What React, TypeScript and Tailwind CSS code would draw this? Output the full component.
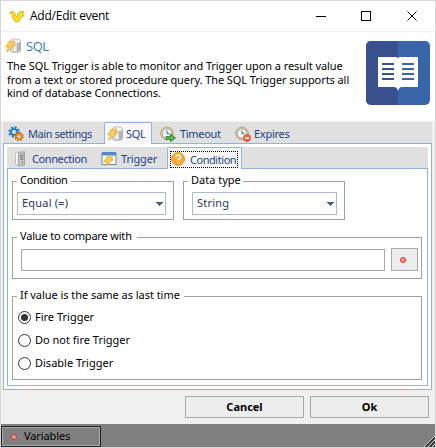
import React from "react";

function DatabaseIcon() {
  return (
    <svg width="16" height="16" viewBox="0 0 16 16" className="shrink-0">
      <path d="M5.500 3v9.500c0 2.500 10 2.500 10 0V3" fill="#d9d9d9" stroke="#a2a2a2" strokeWidth=".8" />
      <path d="M12 5v9c2-.2 3-.8 3-1.500V4z" fill="#b5b5b5" />
      <path d="M9 6v7h1.500V6z" fill="#f7f7f7" />
      <ellipse cx="10.500" cy="3.200" rx="5" ry="2.300" fill="#f4f4f4" stroke="#b0b0b0" strokeWidth=".8" />
      <path d="M4 3.500 10 3 7.500 7h3L1.500 14l2.300-5H.8z" fill="#fcd05a" stroke="#dda640" strokeWidth=".8" />
    </svg>
  );
}

function GearsIcon() {
  return (
    <svg width="16" height="16" viewBox="0 0 16 16" className="shrink-0">
      <circle cx="6" cy="6" r="4.700" fill="none" stroke="#2677b6" strokeWidth="2" strokeDasharray="2 1.690" />
      <circle cx="6" cy="6" r="3.200" fill="#7ab9e4" stroke="#2d85c7" strokeWidth="2" />
      <circle cx="6" cy="6" r="1.500" fill="#fff" />
      <circle cx="11" cy="10.500" r="3.900" fill="none" stroke="#c66a1b" strokeWidth="1.800" strokeDasharray="1.700 1.360" />
      <circle cx="11" cy="10.500" r="2.600" fill="#f5ad50" stroke="#e28527" strokeWidth="1.600" />
      <circle cx="11" cy="10.500" r="1.100" fill="#fff" />
    </svg>
  );
}

function ClockIcon({ expired }: { expired?: boolean }) {
  return (
    <svg width="16" height="16" viewBox="0 0 16 16" className="shrink-0">
      <circle cx="7" cy="7.500" r="6.400" fill="#e2c993" stroke="#b99b63" strokeWidth=".8" />
      <circle cx="7" cy="7.500" r="4.700" fill="#f2f6fb" stroke="#9baabe" />
      <path d="M7 4.500v3.200h2.500" fill="none" stroke="#51617a" />
      {expired ? (
        <>
          <circle cx="12" cy="12" r="3.400" fill="#f0682f" stroke="#ce4a19" strokeWidth=".8" />
          <path d="M10 12h4" stroke="#fff" strokeWidth="1.500" />
        </>
      ) : (
        <path d="M6 10.500h4.500V8l5 4-5 3.700v-2.300H6z" fill="#57b64c" stroke="#2b8430" strokeWidth=".9" />
      )}
    </svg>
  );
}

function ServerIcon() {
  return (
    <svg width="16" height="16" viewBox="0 0 16 16" className="shrink-0">
      <path d="M3.500 2 7 .7h4v13H3.500z" fill="#f5f5f5" stroke="#c2c2c2" />
      <path d="M6.500 1.800 12.500.8v13.200l-6 1z" fill="#c4c4c4" stroke="#9a9a9a" strokeWidth=".8" />
      <path d="M8 4.500 11.500 4M8 6.500 11.500 6M8 8.500l3.500-.5" stroke="#777" />
      <path d="M10.500 10.500v2" stroke="#6cbf58" strokeWidth="1.400" />
    </svg>
  );
}

function TriggerIcon() {
  return (
    <svg width="16" height="16" viewBox="0 0 16 16" className="shrink-0">
      <path d="M1 1.500h14v12H1z" fill="#fff" stroke="#5688c4" />
      <path d="M1 2h14v2.500H1z" fill="#5489c8" />
      <path d="M6 5.500h6l-2 3h3L4 15l2-4H2.500z" fill="#fdcd50" stroke="#deaa42" strokeWidth=".7" />
    </svg>
  );
}

function QuestionIcon() {
  return (
    <svg width="14" height="14" viewBox="0 0 14 14" className="mb-px shrink-0">
      <circle cx="7" cy="7" r="6.400" fill="#fca82f" stroke="#f39322" />
      <path d="M4.700 5.200c0-3 4.700-2.700 4.700 0C9.400 6.900 7 6.600 7 8.500M7 9.700v1.600" fill="none" stroke="#fff" strokeWidth="1.600" />
    </svg>
  );
}

function RedDot() {
  return (
    <svg width="6" height="6" viewBox="0 0 6 6" className="shrink-0">
      <circle cx="3" cy="3" r="2.500" fill="#f78c85" stroke="#df3036" />
      <path d="M2 2.500h2" stroke="#ffc3b8" />
    </svg>
  );
}

function BookIcon() {
  return (
    <svg width="64" height="64" viewBox="0 0 64 64" className="shrink-0">
      <rect width="64" height="64" rx="5" fill="#3865a8" />
      <path d="M5 0h27v64H5a5 5 0 0 1-5-5V5a5 5 0 0 1 5-5" fill="#38508e" />
      <path d="M12 16h18q2 0 2 2 0-2 2-2h18v30H36q-3 0-4 4-1-4-4-4H12z" fill="#fff" />
      <path d="M16 23h12M16 28h12M16 33h12M16 38h12" stroke="#38508e" strokeWidth="2" />
      <path d="M36 23h12M36 28h12M36 33h12M36 38h12" stroke="#3865a8" strokeWidth="2" />
    </svg>
  );
}

function Group({ title, className, titleClass, children }: { title: string; className: string; titleClass: string; children: React.ReactNode }) {
  return (
    <section className={`border border-[#a0a0a0] ${className}`}>
      <h2 className={`-mt-[9px] ml-1 h-4 bg-white pl-[3px] leading-[14px] whitespace-nowrap ${titleClass}`}>{title}</h2>
      {children}
    </section>
  );
}

function Select({ value, className }: { value: string; className: string }) {
  return (
    <div className={`mt-[3px] flex h-[23px] items-center justify-between border border-[#a9bbd6] pr-[2px] pl-1 text-[#1e395b] ${className}`}>
      <span className="pb-[2px] tracking-[0.2px]">{value}</span>
      <svg width="7" height="4" viewBox="0 0 7 4"><path d="M0 0h7v1H6v1H5v1H4v1H3V3H2V2H1V1H0z" fill="#4c607f" /></svg>
    </div>
  );
}

function Radio({ label, checked }: { label: string; checked?: boolean }) {
  return (
    <label className="flex h-[23px] items-center gap-1">
      <span className="flex size-[13px] items-center justify-center rounded-full border border-[#333] bg-white">
        {checked && <span className="size-[7px] rounded-full bg-[#333]" />}
      </span>
      <span className="pb-[2px] whitespace-nowrap">{label}</span>
    </label>
  );
}

export default function App() {
  return (
    <main className="flex h-[448px] w-[436px] flex-col overflow-hidden border border-[#d7d7d7] bg-[#f0f0f0] font-['Noto_Sans',sans-serif] text-[11px] leading-[15px] text-black">
      <header className="flex h-[31px] shrink-0 items-center border-b border-[#f0f0f0] bg-white pl-2">
        <svg width="16" height="12" viewBox="0 0 16 12" className="mt-px">
          <path d="M.5 1.500 3 .5q3 0 3.500 4.500l1.500 1Q8 1.500 11.500.7h3.800l-2 1.500 1.700 2.500-3.200 1.700L10 10.500 7.500 11Q3.500 10 3.500 4z" fill="#ffdb1c" stroke="#c9a925" strokeWidth=".8" />
        </svg>
        <h1 className="ml-[5px] w-[290px] font-['Open_Sans',sans-serif] text-[12px] leading-4 tracking-[-0.22px]">Add/Edit event</h1>
        <svg width="102" height="12" viewBox="0 0 102 12" fill="none" stroke="#000" shapeRendering="crispEdges" className="-ml-[4px]">
          <path d="M0 6.500h10M45.500 1.500h9v9h-9z" />
          <path d="m91.500 1.500 9 9m0-9-9 9" shapeRendering="auto" />
        </svg>
      </header>

      <section className="mb-px flex h-[89px] shrink-0 justify-between bg-white pr-[5px] pl-1">
        <div>
          <div className="mt-[6px] flex h-4 items-center gap-[5px] text-[#3b78b5]">
            <DatabaseIcon />
            <span className="pb-px font-['Open_Sans',sans-serif] text-[13px] leading-4 tracking-[-0.5px]">SQL</span>
          </div>
          <p className="mt-[5px] ml-[2px] leading-[13.5px] tracking-[-0.075px] whitespace-nowrap">
            <span className="block">The SQL Trigger is able to monitor and Trigger upon a result value</span>
            <span className="block">from a text or stored procedure query. The SQL Trigger supports all</span>
            <span className="block">kind of database Connections.</span>
          </p>
        </div>
        <div className="pt-[9px]"><BookIcon /></div>
      </section>

      <section className="mx-[2px] h-[268px] w-[429px] shrink-0">
        <nav className="flex h-[21px] items-center bg-[#e0e0e0] whitespace-nowrap text-[#1c438b]">
          <div className="flex w-[101px] items-center gap-1 pt-[2px] pl-[5px]"><GearsIcon /><span className="tracking-[-0.45px]">Main settings</span></div>
          <div className="flex h-[21px] w-[48px] items-center gap-[3px] rounded-t-[2px] border border-b-0 border-[#8fb2e5] bg-[#f8f8f8] pt-px pl-[2px]"><DatabaseIcon /><span className="pb-px tracking-[-0.3px]">SQL</span></div>
          <div className="flex w-[75px] items-center gap-1 pt-[2px] pl-2"><ClockIcon /><span className="tracking-[-0.3px]">Timeout</span></div>
          <div className="flex items-center gap-[3px] pt-[2px] pl-2"><ClockIcon expired /><span className="tracking-[-0.25px]">Expires</span></div>
        </nav>
        <div className="h-[247px] border border-t-0 border-[#8fb2e5] bg-white px-[3px]">
          <div className="-mx-[3px] flex h-px bg-[#8fb2e5]"><div className="ml-[101px] w-[46px] bg-[#f8f8f8]" /></div>
          <nav className="mt-[3px] flex h-[21px] items-center bg-[#e0e0e0] whitespace-nowrap text-[#1c438b]">
            <div className="flex w-[90px] items-center gap-1 pt-[2px] pl-[5px]"><ServerIcon /><span className="tracking-[-0.4px]">Connection</span></div>
            <div className="flex w-[70px] items-center gap-1 pt-[2px] pl-1"><TriggerIcon /><span className="tracking-[-0.15px]">Trigger</span></div>
            <div className="flex h-[21px] w-[75px] rounded-t-[2px] border border-b-0 border-[#8fb2e5] bg-[#f8f8f8] p-[2px] pt-[3px]">
              <div className="flex h-[17px] w-[68px] items-center gap-[5px] border border-dotted border-black"><QuestionIcon /><span className="pb-px tracking-[-0.45px]">Condition</span></div>
            </div>
          </nav>
          <div className="h-[218px] border border-t-0 border-[#8fb2e5] px-1">
            <div className="-mx-1 flex h-px bg-[#8fb2e5]"><div className="ml-[160px] w-[73px] bg-[#f8f8f8]" /></div>
            <div className="flex gap-[9px] pt-3">
              <Group title="Condition" className="h-[39px] w-[162px]" titleClass="w-[54px] tracking-[-0.3px]">
                <Select value="Equal (=)" className="ml-1 w-[149px]" />
              </Group>
              <Group title="Data type" className="h-[39px] w-[162px]" titleClass="w-[55px]">
                <Select value="String" className="ml-2 w-[145px]" />
              </Group>
            </div>
            <Group title="Value to compare with" className="mt-[17px] h-[42px] w-[410px]" titleClass="w-[120px] tracking-[-0.18px]">
              <div className="mt-[3px] ml-2 flex items-end gap-[6px]">
                <div className="h-[22px] w-[364px] border border-[#a9a9a9] bg-white" />
                <button className="flex h-[23px] w-[27px] items-center justify-center border border-[#a9a9a9] bg-[#ededed] pr-[3px]"><RedDot /></button>
              </div>
            </Group>
            <Group title="If value is the same as last time" className="mt-[17px] h-[84px] w-[410px]" titleClass="w-[167px] tracking-[-0.04px]">
              <div className="mt-[2px] ml-[5px]">
                <Radio label="Fire Trigger" checked />
                <Radio label="Do not fire Trigger" />
                <Radio label="Disable Trigger" />
              </div>
            </Group>
          </div>
        </div>
      </section>

      <div className="mt-[6px] flex shrink-0 gap-[6px] pl-[184px] font-bold">
        <button className="h-[22px] w-[119px] border border-[#a9a9a9] bg-[#ededed] pb-px">Cancel</button>
        <button className="h-[22px] w-[119px] border border-[#a9a9a9] bg-[#ededed] pb-px">Ok</button>
      </div>
      <footer className="mt-[6px] flex h-[23px] shrink-0 items-end justify-between bg-[#808080]">
        <button className="flex h-[21px] w-[100px] items-center gap-[7px] border border-[#222] pl-[9px] shadow-[inset_0_0_0_1px_#a9a9a9]"><RedDot /><span className="pb-[2px] tracking-[-0.1px]">Variables</span></button>
        <svg width="11" height="11" viewBox="0 0 11 11" fill="none">
          <path d="M0 11 11 0M4 11l7-7M8 11l3-3" stroke="#ddd" />
          <path d="m1.500 11 9.500-9.500M5.500 11 11 5.500M9.500 11 11 9.500" stroke="#222" strokeWidth="1.500" />
        </svg>
      </footer>
    </main>
  );
}
